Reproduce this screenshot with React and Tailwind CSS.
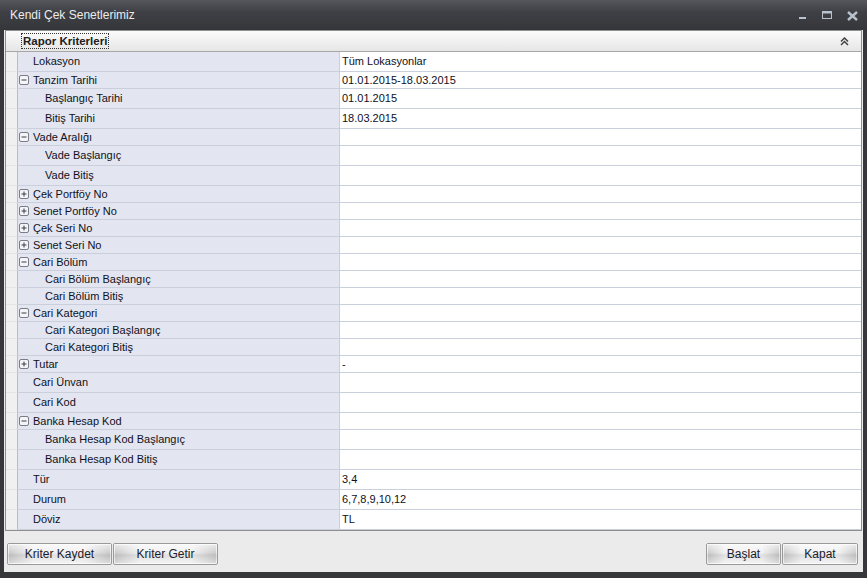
import React from "react";

const rows = [
  { label: "Lokasyon", level: 1, value: "Tüm Lokasyonlar", h: 20 },
  { label: "Tanzim Tarihi", level: 1, icon: "-", value: "01.01.2015-18.03.2015", h: 17 },
  { label: "Başlangıç Tarihi", level: 2, value: "01.01.2015", h: 20 },
  { label: "Bitiş Tarihi", level: 2, value: "18.03.2015", h: 20 },
  { label: "Vade Aralığı", level: 1, icon: "-", h: 17 },
  { label: "Vade Başlangıç", level: 2, h: 20 },
  { label: "Vade Bitiş", level: 2, h: 20 },
  { label: "Çek Portföy No", level: 1, icon: "+", h: 17 },
  { label: "Senet Portföy No", level: 1, icon: "+", h: 17 },
  { label: "Çek Seri No", level: 1, icon: "+", h: 17 },
  { label: "Senet Seri No", level: 1, icon: "+", h: 17 },
  { label: "Cari Bölüm", level: 1, icon: "-", h: 17 },
  { label: "Cari Bölüm Başlangıç", level: 2, h: 17 },
  { label: "Cari Bölüm Bitiş", level: 2, h: 17 },
  { label: "Cari Kategori", level: 1, icon: "-", h: 17 },
  { label: "Cari Kategori Başlangıç", level: 2, h: 17 },
  { label: "Cari Kategori Bitiş", level: 2, h: 17 },
  { label: "Tutar", level: 1, icon: "+", value: "-", h: 17 },
  { label: "Cari Ünvan", level: 1, h: 20 },
  { label: "Cari Kod", level: 1, h: 20 },
  { label: "Banka Hesap Kod", level: 1, icon: "-", h: 17 },
  { label: "Banka Hesap Kod Başlangıç", level: 2, h: 20 },
  { label: "Banka Hesap Kod Bitiş", level: 2, h: 20 },
  { label: "Tür", level: 1, value: "3,4", h: 20 },
  { label: "Durum", level: 1, value: "6,7,8,9,10,12", h: 20 },
  { label: "Döviz", level: 1, value: "TL", h: 20 },
];

function ExpandBox({ kind }) {
  return (
    <svg width="10" height="10" viewBox="0 0 10 10" className="shrink-0">
      <rect x="0.5" y="0.5" width="9" height="9" rx="1.5" fill="#f4f5f8" stroke="#7a7d86" />
      <path d="M2.5 5h5" stroke="#3a3d46" strokeWidth="1" />
      {kind === "+" && <path d="M5 2.5v5" stroke="#3a3d46" strokeWidth="1" />}
    </svg>
  );
}

function Row({ row }) {
  return (
    <div className="flex" style={{ height: row.h }}>
      <div className="w-[12px] shrink-0 bg-[#f0f0f0] border-b border-[#e4e4e4] border-r border-r-[#b9bcc4]" />
      <div className="w-[321px] shrink-0 bg-[#e3e6f0] border-b border-[#c9d0dc] flex items-center">
        {row.level === 1 ? (
          <div className="flex items-center">
            <div className="w-[15px] flex justify-end pr-[4px]">
              {row.icon && <ExpandBox kind={row.icon} />}
            </div>
            <span>{row.label}</span>
          </div>
        ) : (
          <span className="pl-[27px]">{row.label}</span>
        )}
      </div>
      <div className="flex-1 bg-white border-b border-l border-[#c9d0dc] flex items-center pl-[2px]">
        {row.value}
      </div>
    </div>
  );
}

function Btn({ children, w }) {
  return (
    <button
      className="h-[22px] rounded-[2px] border border-[#9a9a9a] text-[12px] text-[#1c1c2a] shadow-[inset_0_0_0_1px_rgba(255,255,255,0.7)] bg-[linear-gradient(to_right,#c9c9c9,#f1f1f1_25%,#f1f1f1_75%,#c9c9c9)]"
      style={{ width: w }}
    >
      <span className="block h-full leading-[20px] bg-[linear-gradient(to_bottom,rgba(255,255,255,0.6),rgba(255,255,255,0)_45%,rgba(0,0,0,0.07)_55%,rgba(255,255,255,0.3))]">
        {children}
      </span>
    </button>
  );
}

export default function App() {
  return (
    <div
      className="w-[867px] h-[578px] bg-[#36373b] flex flex-col overflow-hidden"
      style={{ fontFamily: '"Liberation Sans", Arial, sans-serif' }}
    >
      {/* title bar */}
      <div className="h-[30px] shrink-0 flex items-center justify-between pl-[10px] pr-[9px] bg-[linear-gradient(to_bottom,#55575c,#3e4045_40%,#34363a)]">
        <span className="text-[12px] text-[#ececec] pb-[1px]">Kendi Çek Senetlerimiz</span>
        <div className="flex items-center gap-[14px] pt-[1px]">
          <svg width="10" height="10" viewBox="0 0 10 10">
            <rect x="1" y="6" width="7" height="2" fill="#b9c2cc" />
          </svg>
          <svg width="11" height="10" viewBox="0 0 11 10">
            <rect x="0.5" y="0.5" width="9" height="7" fill="none" stroke="#b9c2cc" />
            <rect x="0.5" y="0.5" width="9" height="2" fill="#b9c2cc" />
          </svg>
          <svg width="11" height="10" viewBox="0 0 11 10">
            <path d="M1 1l9 8M10 1l-9 8" stroke="#b9c2cc" strokeWidth="2.4" />
          </svg>
        </div>
      </div>

      {/* body */}
      <div className="flex-1 mx-[4px] mb-[6px] bg-[#ebebeb] flex flex-col">
        <div className="mx-[1px] border border-[#8e8e8e] bg-white text-[11px] text-[#10101c]">
          <div className="h-[21px] flex items-center justify-between border-b border-[#a7a7a7] bg-[linear-gradient(to_bottom,#fbfbfb,#e6e6e6)] pl-[16px] pr-[12px]">
            <span className="font-bold text-[11.5px] text-[#202020] outline outline-1 outline-dotted outline-[#333] px-[1px] leading-[14px]">
              Rapor Kriterleri
            </span>
            <svg width="9" height="9" viewBox="0 0 9 9">
              <path d="M1 4.5L4.5 1 8 4.5M1 8L4.5 4.5 8 8" fill="none" stroke="#444" strokeWidth="1.5" />
            </svg>
          </div>
          {rows.map((r) => (
            <Row key={r.label} row={r} />
          ))}
        </div>
        <div className="flex justify-between items-center pt-[12px] pl-[3px] pr-[5px]">
          <div className="flex gap-[1px]">
            <Btn w={105}>Kriter Kaydet</Btn>
            <Btn w={105}>Kriter Getir</Btn>
          </div>
          <div className="flex gap-[1px]">
            <Btn w={75}>Başlat</Btn>
            <Btn w={76}>Kapat</Btn>
          </div>
        </div>
      </div>
    </div>
  );
}
